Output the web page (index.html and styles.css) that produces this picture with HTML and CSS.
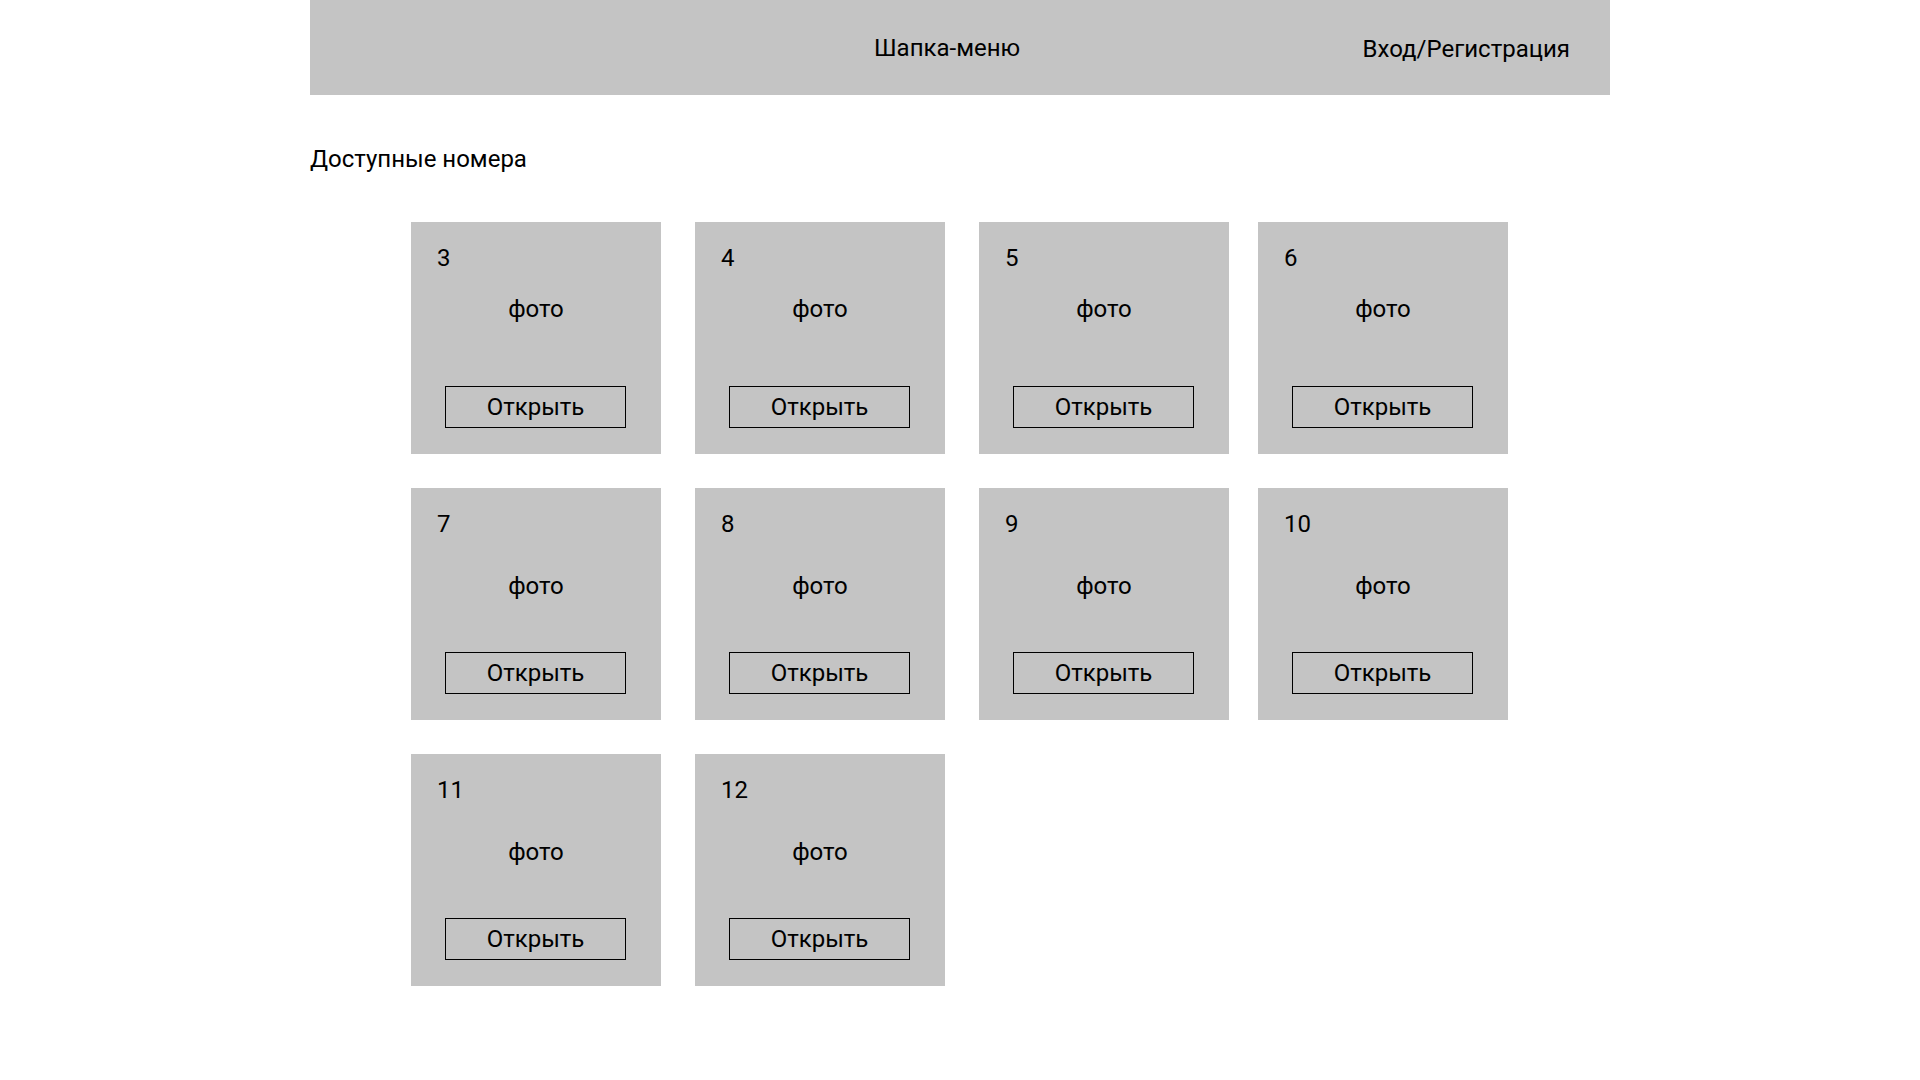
FILE: index.html
```html
<!DOCTYPE html>
<html lang="ru">
<head>
<meta charset="utf-8">
<title>Доступные номера</title>
<link rel="stylesheet" href="styles.css">
</head>
<body>
<div class="page">
  <header class="header">
    <div class="header-title">Шапка-меню</div>
    <a class="header-login" href="#">Вход/Регистрация</a>
  </header>
  <main class="main">
    <h1 class="heading">Доступные номера</h1>
    <div class="rooms">
      <div class="card card--first-row"><div class="card-num">3</div><div class="card-photo">фото</div><button class="card-btn">Открыть</button></div>
      <div class="card card--first-row"><div class="card-num">4</div><div class="card-photo">фото</div><button class="card-btn">Открыть</button></div>
      <div class="card card--first-row"><div class="card-num">5</div><div class="card-photo">фото</div><button class="card-btn">Открыть</button></div>
      <div class="card card--first-row"><div class="card-num">6</div><div class="card-photo">фото</div><button class="card-btn">Открыть</button></div>
      <div class="card"><div class="card-num">7</div><div class="card-photo">фото</div><button class="card-btn">Открыть</button></div>
      <div class="card"><div class="card-num">8</div><div class="card-photo">фото</div><button class="card-btn">Открыть</button></div>
      <div class="card"><div class="card-num">9</div><div class="card-photo">фото</div><button class="card-btn">Открыть</button></div>
      <div class="card"><div class="card-num">10</div><div class="card-photo">фото</div><button class="card-btn">Открыть</button></div>
      <div class="card"><div class="card-num">11</div><div class="card-photo">фото</div><button class="card-btn">Открыть</button></div>
      <div class="card"><div class="card-num">12</div><div class="card-photo">фото</div><button class="card-btn">Открыть</button></div>
    </div>
  </main>
</div>
</body>
</html>
```

FILE: styles.css
```css
* {
  box-sizing: border-box;
}

html, body {
  margin: 0;
  padding: 0;
  background: #ffffff;
}

body {
  font-family: Roboto, "Liberation Sans", Arial, sans-serif;
  font-size: 24px;
  line-height: 28px;
  color: #000000;
}

.page {
  width: 1300px;
  margin: 0 auto;
}

.header {
  height: 95px;
  background: #c4c4c4;
  display: flex;
  align-items: center;
  padding: 0 40px 0 564px;
}

.header-title {
  font-size: 24px;
}

.header-login {
  margin-left: auto;
  color: #000000;
  text-decoration: none;
  padding-top: 2px;
}

.main {
  padding-top: 50px;
}

.heading {
  margin: 0;
  font-size: 24px;
  font-weight: 400;
  line-height: 28px;
}

.rooms {
  margin-top: 49px;
  padding-left: 101px;
  display: grid;
  grid-template-columns: 284px 284px 279px 250px;
  row-gap: 34px;
}

.card {
  width: 250px;
  height: 232px;
  background: #c4c4c4;
  padding: 22px 0 26px;
  display: flex;
  flex-direction: column;
}

.card-num {
  padding-left: 26px;
}

.card-photo {
  margin-top: 34px;
  text-align: center;
}

.card--first-row .card-photo {
  margin-top: 23px;
}

.card-btn {
  margin: auto 0 0 34px;
  width: 181px;
  height: 42px;
  border: 1px solid #000000;
  background: transparent;
  font-family: inherit;
  font-size: 24px;
  line-height: 28px;
  color: #000000;
  padding: 0;
  cursor: pointer;
}
```
